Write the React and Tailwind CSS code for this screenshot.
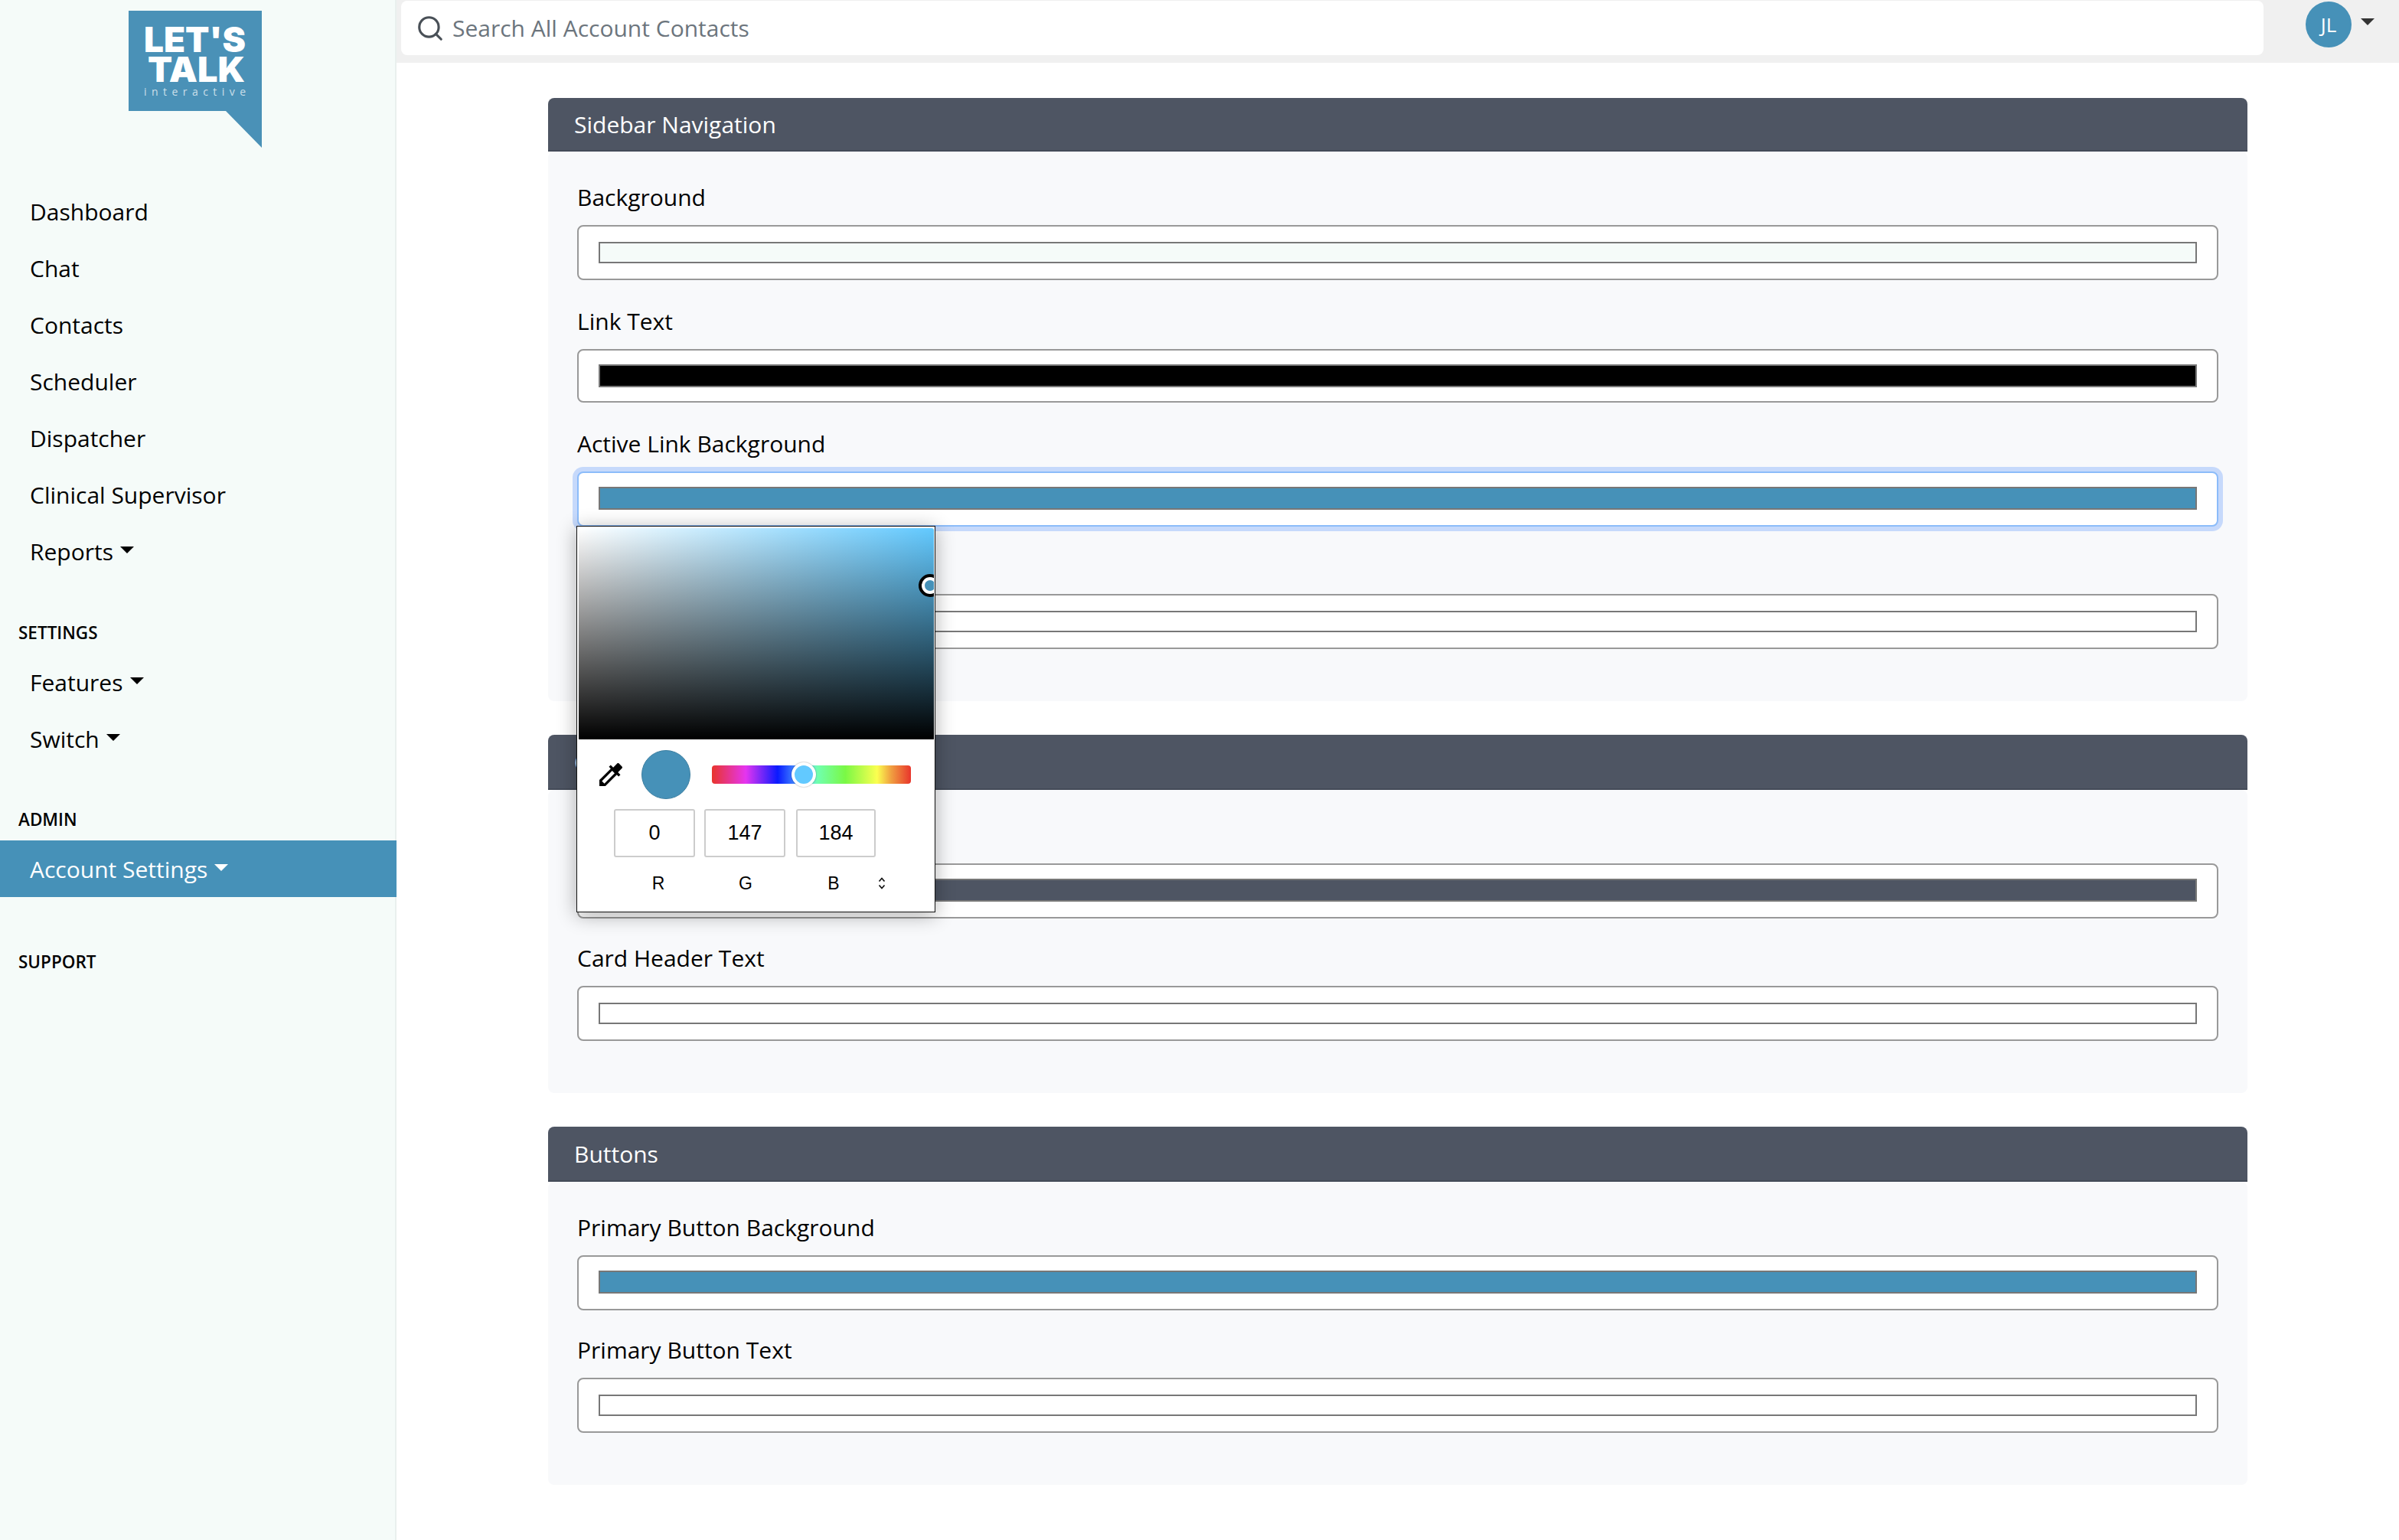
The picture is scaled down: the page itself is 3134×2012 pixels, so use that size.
import React from "react";
import { Search } from "lucide-react";

const Caret = ({ className = "" }) => (
  <span className={"ml-[9px] mb-[3px] inline-block h-0 w-0 border-x-[9px] border-t-[9px] border-x-transparent " + className} />
);

const NavItem = ({ label, caret, active }) => (
  <div className={"flex h-[74px] items-center pl-[39px] text-[30px] " + (active ? "mr-[-2px] bg-[#4691b8] text-white" : "text-black")}>
    <span>{label}</span>
    {caret && <Caret className={active ? "border-t-white" : "border-t-black"} />}
  </div>
);

const SectionTitle = ({ children, className }) => (
  <div className={"flex h-[30px] items-center pl-[24px] text-[22.5px] font-semibold text-black " + className}>{children}</div>
);

const Logo = () => (
  <svg width="174" height="179" viewBox="0 0 174 179">
    <polygon points="0,0 174,0 174,179 127,131 0,131" fill="#4a91b7" />
    <text x="20" y="54" fill="#fff" fontFamily="Inter, sans-serif" fontWeight="900" fontSize="45" textLength="133" lengthAdjust="spacingAndGlyphs">LET'S</text>
    <text x="25" y="93" fill="#fff" fontFamily="Inter, sans-serif" fontWeight="900" fontSize="45" textLength="127" lengthAdjust="spacingAndGlyphs">TALK</text>
    <text x="20" y="111" fill="#fff" fillOpacity="0.72" fontFamily="'Open Sans', sans-serif" fontSize="14" textLength="133" lengthAdjust="spacing">interactive</text>
  </svg>
);

const Eyedropper = () => (
  <svg width="40" height="40" viewBox="0 0 24 24" fill="#000" className="shrink-0">
    <path d="M20.71 5.63l-2.34-2.34c-.39-.39-1.02-.39-1.41 0l-3.12 3.12-1.93-1.91-1.41 1.41 1.42 1.42L3 16.25V21h4.75l8.92-8.92 1.42 1.42 1.41-1.41-1.92-1.92 3.12-3.12c.4-.4.4-1.03.01-1.42zM6.92 19L5 17.08l8.06-8.06 1.92 1.92L6.92 19z" />
  </svg>
);

const UpDown = () => (
  <svg width="12" height="18" viewBox="0 0 12 18" fill="none" stroke="#111" strokeWidth="1.7" className="ml-[4px]">
    <path d="M2.5 6.5 6 2.5l3.5 4M2.5 11.5 6 15.5l3.5-4" />
  </svg>
);

const Picker = () => (
  <div className="absolute left-[-1px] top-[131px] z-10 h-[505px] w-[469px] border border-[#111] bg-white font-['Liberation_Sans',Arial,sans-serif] text-black shadow-[0_4px_24px_rgba(0,0,0,0.32)]">
    <div className="relative ml-[2px] mt-[2px] h-[276px] w-[464px] overflow-hidden rounded-t-[3px] bg-[linear-gradient(to_top,#000,transparent),linear-gradient(to_right,#fff,#62c9ff)]">
      <div className="absolute left-[444px] top-[60px] h-[30px] w-[30px] rounded-full border-[4px] border-black bg-white p-[4px]">
        <div className="h-full w-full rounded-full bg-[#4691b8]" />
      </div>
    </div>
    <div className="mt-[14px] flex h-[64px] items-center pl-[24px]">
      <Eyedropper />
      <div className="ml-[20px] h-[64px] w-[64px] rounded-full border border-[#3d7fa1] bg-[#4691b8]" />
      <div className="relative ml-[28px] h-[24px] w-[260px] rounded-[4px] bg-[linear-gradient(to_right,#e8352c_0%,#e535f0_17%,#0a1aff_33%,#62c9ff_47%,#70ffb0_53%,#7af845_67%,#fbff50_83%,#f0a040_90%,#e8352c_100%)]">
        <div className="absolute left-[104px] top-[-4px] h-[32px] w-[32px] rounded-full border-[4px] border-white bg-[#62c9ff] shadow-[0_0_2px_rgba(0,0,0,0.4)]" />
      </div>
    </div>
    <div className="mt-[13px] flex pl-[48px] text-[27px]">
      <div className="flex h-[63px] w-[106px] items-center justify-center rounded-[3px] border-2 border-[#cccccc]">0</div>
      <div className="ml-[12px] flex h-[63px] w-[106px] items-center justify-center rounded-[3px] border-2 border-[#cccccc]">147</div>
      <div className="ml-[14px] flex h-[63px] w-[104px] items-center justify-center rounded-[3px] border-2 border-[#cccccc]">184</div>
    </div>
    <div className="mt-[19px] flex h-[30px] items-center pl-[53px] text-[23px]">
      <div className="w-[106px] text-center">R</div>
      <div className="ml-[8px] w-[106px] text-center">G</div>
      <div className="ml-[9px] w-[106px] text-center">B</div>
      <UpDown />
    </div>
  </div>
);

const Field = ({ label, color, box, swatch, mb = "mb-[28px]", focus, children }) => (
  <div className={"relative " + mb}>
    <div className="mb-[12px] h-[48px] text-[30px] leading-[48px] text-black">{label}</div>
    <div className={"box-border rounded-[8px] border-2 bg-white px-[26px] " + box + " " + (focus ? "border-[#8cbcfa] shadow-[0_0_0_6px_#c6d9fb]" : "border-[#999999]")}>
      <div className={"box-border border-2 border-[#777777] " + swatch + " " + color} />
    </div>
    {children}
  </div>
);

const Card = ({ title, header = "h-[72px]", children, className = "mb-[44px]" }) => (
  <section className={className}>
    <div className={"flex items-center rounded-t-[8px] border-b-2 border-[#444b58] bg-[#4e5563] pl-[34px] text-[30px] text-white " + header}>{title}</div>
    <div className="rounded-[8px] bg-[#f8f9fb] px-[38px] pb-[40px] pt-[36px]">{children}</div>
  </section>
);

export default function App() {
  return (
    <div className="flex min-h-[2012px] w-full bg-white font-['Open_Sans',sans-serif]">
      <aside className="w-[518px] shrink-0 border-r-2 border-[#e9f0ee] bg-[#f5fbf9]">
        <div className="pl-[168px] pt-[14px]"><Logo /></div>
        <nav className="mt-[46px]">
          <NavItem label="Dashboard" />
          <NavItem label="Chat" />
          <NavItem label="Contacts" />
          <NavItem label="Scheduler" />
          <NavItem label="Dispatcher" />
          <NavItem label="Clinical Supervisor" />
          <NavItem label="Reports" caret />
          <SectionTitle className="mb-[12px] mt-[55px]">SETTINGS</SectionTitle>
          <NavItem label="Features" caret />
          <NavItem label="Switch" caret />
          <SectionTitle className="mb-[12px] mt-[54px]">ADMIN</SectionTitle>
          <NavItem label="Account Settings" caret active />
          <SectionTitle className="mt-[70px]">SUPPORT</SectionTitle>
        </nav>
      </aside>
      <div className="min-w-0 flex-1">
        <header className="flex h-[82px] items-start bg-[#f0f0f0]">
          <div className="ml-[6px] mt-px flex h-[71px] flex-1 items-center rounded-[8px] bg-white pl-[19px]">
            <Search size={38} strokeWidth={2} className="text-[#495057]" />
            <span className="ml-[10px] text-[30px] text-[#6c757d]">Search All Account Contacts</span>
          </div>
          <div className="ml-[55px] mt-[2px] flex h-[60px] w-[60px] items-center justify-center rounded-full bg-[#4691b8] text-[26px] text-white">JL</div>
          <span className="ml-[12px] mr-[32px] mt-[24px] h-0 w-0 border-x-[9px] border-t-[9px] border-x-transparent border-t-[#333333]" />
        </header>
        <main className="px-[198px] pt-[46px]">
          <Card title="Sidebar Navigation" header="h-[70px]">
            <Field label="Background" color="bg-[#f5fbf9]" box="h-[72px] pt-[20px]" swatch="h-[28px]" mb="mb-[30px]" />
            <Field label="Link Text" color="bg-black" box="h-[70px] pt-[18px]" swatch="h-[30px]" mb="mb-[30px]" />
            <Field label="Active Link Background" color="bg-[#4691b8]" box="h-[72px] pt-[18px]" swatch="h-[30px]" focus>
              <Picker />
            </Field>
            <Field color="bg-white" box="h-[72px] pt-[20px]" swatch="h-[28px]" />
          </Card>
          <Card title="Card Header">
            <Field color="bg-[#4e5563]" box="h-[72px] pt-[18px]" swatch="h-[30px]" />
            <Field label="Card Header Text" color="bg-white" box="h-[72px] pt-[20px]" swatch="h-[28px]" />
          </Card>
          <Card title="Buttons" className="">
            <Field label="Primary Button Background" color="bg-[#4691b8]" box="h-[72px] pt-[18px]" swatch="h-[30px]" />
            <Field label="Primary Button Text" color="bg-white" box="h-[72px] pt-[20px]" swatch="h-[28px]" />
          </Card>
        </main>
      </div>
    </div>
  );
}
